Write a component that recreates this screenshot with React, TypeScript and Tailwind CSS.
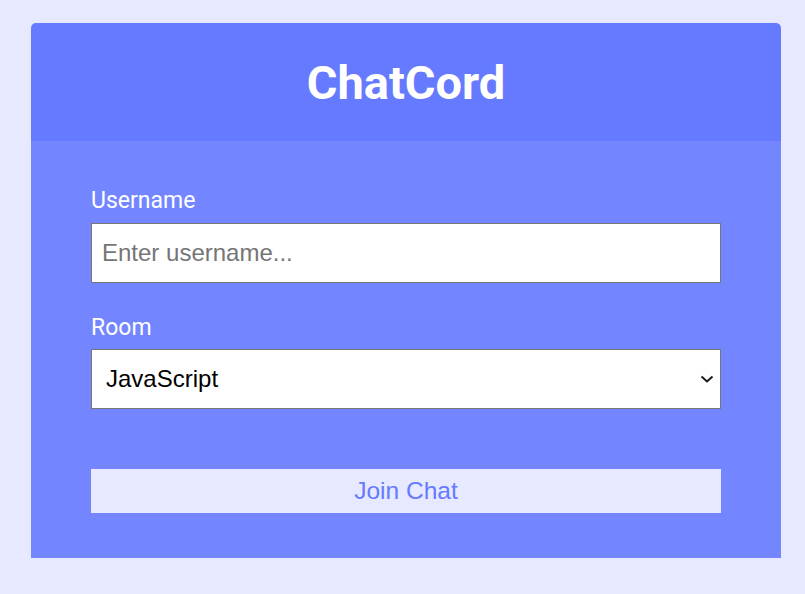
export default function App() {
  return (
    <div className="min-h-[594px] bg-[#e6e9ff] pt-[23px] pl-[31px]">
      <div className="w-[750px] overflow-hidden rounded-t-[5px]">
        <header className="flex h-[118px] items-center justify-center bg-[#667aff]">
          <h1
            className="text-[47px] font-bold leading-none text-white"
            style={{ fontFamily: "Roboto, sans-serif" }}
          >
            ChatCord
          </h1>
        </header>
        <main className="bg-[#7386ff] px-[60px] pt-[46px] pb-[45px]">
          <form onSubmit={e => e.preventDefault()}>
            <div>
              <label
                htmlFor="username"
                className="mb-[9px] block h-[27px] text-[23px] leading-[27px] text-white"
                style={{ fontFamily: "Roboto, sans-serif" }}
              >
                Username
              </label>
              <input
                id="username"
                type="text"
                placeholder="Enter username..."
                className="block h-[60px] w-full border border-[#767676] bg-white pl-[10px] text-[24px] text-black outline-none placeholder:text-[#757575]"
                style={{ fontFamily: "'Liberation Sans', Arial, sans-serif" }}
              />
            </div>
            <div className="mt-[31px]">
              <label
                htmlFor="room"
                className="mb-[8px] block h-[27px] text-[23px] leading-[27px] text-white"
                style={{ fontFamily: "Roboto, sans-serif" }}
              >
                Room
              </label>
              <div className="relative">
                <select
                  id="room"
                  className="block h-[60px] w-full appearance-none rounded-none border border-[#767676] bg-white pl-[14px] text-[24px] text-black outline-none"
                  style={{ fontFamily: "'Liberation Sans', Arial, sans-serif" }}
                  defaultValue="JavaScript"
                >
                  <option value="JavaScript">JavaScript</option>
                  <option value="Python">Python</option>
                  <option value="PHP">PHP</option>
                  <option value="C#">C#</option>
                  <option value="Ruby">Ruby</option>
                  <option value="Java">Java</option>
                </select>
                <svg
                  className="pointer-events-none absolute right-[7px] top-1/2 -translate-y-1/2"
                  width="14"
                  height="8"
                  viewBox="0 0 14 8"
                  fill="none"
                >
                  <path d="M1.5 1.5L7 6.5l5.5-5" stroke="#1a1a1a" strokeWidth="2" />
                </svg>
              </div>
            </div>
            <button
              type="submit"
              className="mt-[60px] block h-[44px] w-full bg-[#e6e9ff] text-[24.5px] text-[#667aff]"
              style={{ fontFamily: "'Liberation Sans', Arial, sans-serif" }}
            >
              Join Chat
            </button>
          </form>
        </main>
      </div>
    </div>
  );
}
